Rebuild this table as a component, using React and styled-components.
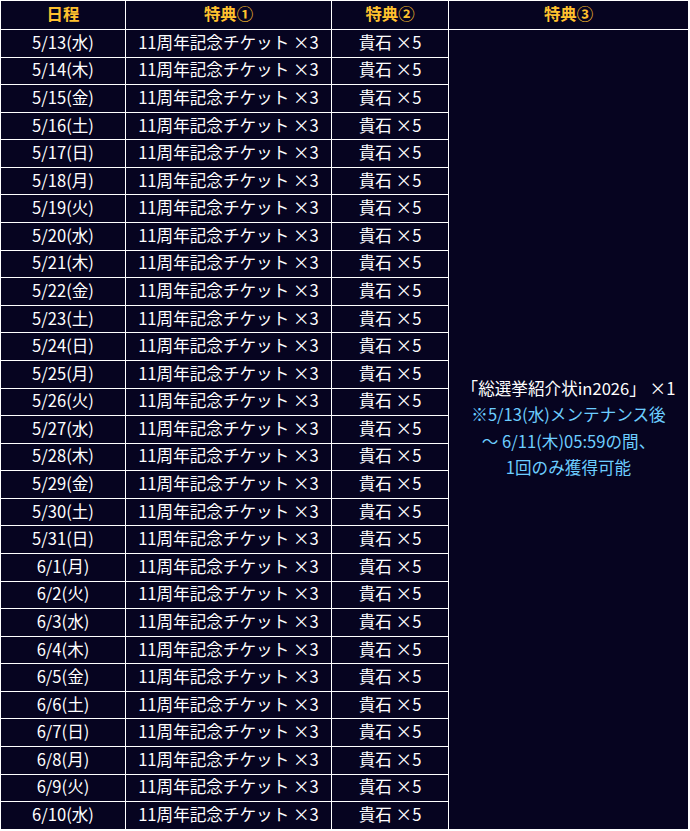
import React from "react";
import styled, { createGlobalStyle } from "styled-components";

const GlobalStyle = createGlobalStyle`
  html, body {
    margin: 0;
    padding: 0;
    background: #ffffff;
  }
  body {
    font-family: "Noto Sans CJK JP", "Noto Sans", sans-serif;
  }
`;

const days = ["日", "月", "火", "水", "木", "金", "土"];

// 5/13(水) 〜 6/10(水)
const dates = [];
for (let i = 0; i < 29; i++) {
  const d = new Date(2026, 4, 13 + i);
  dates.push(`${d.getMonth() + 1}/${d.getDate()}(${days[d.getDay()]})`);
}

export default function App() {
  return (
    <>
      <GlobalStyle />
      <Table>
        <colgroup>
          <col style={{ width: 125 }} />
          <col style={{ width: 206 }} />
          <col style={{ width: 117 }} />
          <col />
        </colgroup>
        <thead>
          <HeadRow>
            <Th>日程</Th>
            <Th>特典①</Th>
            <Th>特典②</Th>
            <Th>特典③</Th>
          </HeadRow>
        </thead>
        <tbody>
          {dates.map((date, i) => (
            <Row key={date}>
              <Td>{date}</Td>
              <Td>11周年記念チケット ×3</Td>
              <Td>貴石 ×5</Td>
              {i === 0 && (
                <Td rowSpan={dates.length}>
                  <Reward>「総選挙紹介状in2026」 ×1</Reward>
                  <Note>
                    ※5/13(水)メンテナンス後
                    <br />
                    ～ 6/11(木)05:59の間、
                    <br />
                    1回のみ獲得可能
                  </Note>
                </Td>
              )}
            </Row>
          ))}
        </tbody>
      </Table>
    </>
  );
}

const Table = styled.table`
  width: 689px;
  border-collapse: collapse;
  table-layout: fixed;
  background: #060420;
  color: #ffffff;
  font-size: 16.6px;
  border: 1px solid #ffffff;
`;

const HeadRow = styled.tr`
  height: 29px;
`;

const Th = styled.th`
  padding: 0 0 4px;
  border: 1px solid #ffffff;
  color: #ffc12e;
  font-weight: 700;
  font-size: 16.4px;
  line-height: 20px;
  text-align: center;
`;

const Row = styled.tr`
  height: 27.58px;
`;

const Td = styled.td`
  padding: 0 0 3px;
  border: 1px solid #ffffff;
  line-height: 20px;
  text-align: center;
  white-space: nowrap;
  vertical-align: middle;
`;

const Reward = styled.div`
  color: #ffffff;
  line-height: 26.6px;
`;

const Note = styled.div`
  color: #6ccdff;
  line-height: 26.6px;
`;
